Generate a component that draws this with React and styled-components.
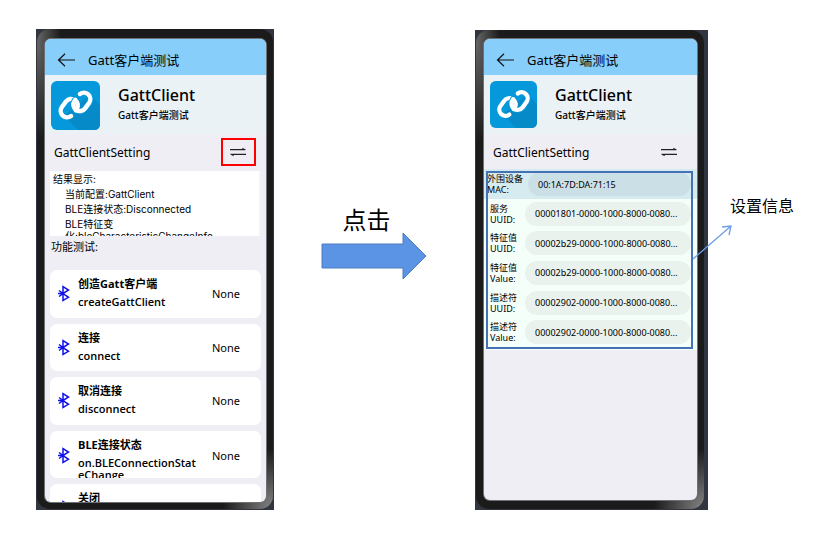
import React from "react";
import styled, { createGlobalStyle } from "styled-components";

const GlobalStyle = createGlobalStyle`
  * { box-sizing: border-box; }
  body {
    margin: 0;
    background: #fff;
    color: #000;
    font-family: "Noto Sans", "Noto Sans CJK SC", sans-serif;
  }
  h1, h2, p, ul { margin: 0; padding: 0; }
  ul { list-style: none; }
  button, input { font: inherit; color: inherit; margin: 0; }
`;

const Page = styled.main`
  display: grid;
  grid-template-columns: 238fr 201fr 233fr 112fr;
  padding: 29px 0 49px 36px;
`;

const Backdrop = styled.section`
  display: flex;
  min-width: 0;
  margin-top: ${(p) => (p.$offset ? "1px" : 0)};
  padding: 0 ${(p) => (p.$wide ? "4px" : "1px")} 1px 1px;
  background: #30353f;
`;

const Bezel = styled.div`
  flex: 1;
  min-width: 0;
  display: flex;
  padding: ${(p) => (p.$wide ? "9px 7px 9px 8px" : "10px 7px 7px 8px")};
  border-radius: 13px;
  background:
    radial-gradient(ellipse 24px 100px at 0 12px, #666, transparent),
    radial-gradient(ellipse 50px 60px at 100% 100%, #858585, transparent),
    #1b1b1b;
`;

const Screen = styled.div`
  flex: 1;
  min-width: 0;
  overflow: hidden;
  border-radius: 6px;
  background: #efeef4;
  box-shadow: 0 0 0 1px #6d7276;
`;

const TopBar = styled.header`
  display: flex;
  align-items: center;
  gap: 12px;
  height: 36px;
  padding: 5px 12px 0;
  background: #87cefa;
`;

const BackButton = styled.button`
  display: flex;
  padding: 0;
  border: 0;
  background: none;
`;

const BarTitle = styled.h1`
  font-size: 13px;
  font-weight: 400;
  line-height: 20px;
  white-space: nowrap;
`;

const AppInfo = styled.div`
  display: flex;
  align-items: flex-start;
  gap: 18px;
  height: 59px;
  padding: 6px 6px 0;
  background: #ebf2f5;
`;

const AppName = styled.h2`
  padding-top: 3px;
  font-size: 16px;
  font-weight: 500;
  line-height: 22px;
`;

const AppNote = styled.p`
  font-size: 10px;
  font-weight: 500;
  line-height: 18px;
`;

const SettingRow = styled.div`
  display: flex;
  align-items: center;
  justify-content: space-between;
  height: 35px;
  padding: 0 10px 0 9px;
  font-size: 12px;
`;

const SettingName = styled.span`
  padding-top: 2px;
`;

const SwapButton = styled.button`
  display: flex;
  align-items: center;
  justify-content: center;
  width: 35px;
  height: 28px;
  padding: 0 2px 0 0;
  border: 2px solid ${(p) => (p.$marked ? "#f00" : "transparent")};
  background: none;
`;

const Result = styled.div`
  height: 65px;
  margin: 2px 5px 0;
  padding: 1px 3px;
  overflow: hidden;
  border-right: 2px solid #f3f3f3;
  background: #fff;
  font-family: Inter, "Noto Sans CJK SC", sans-serif;
  font-size: 10px;
  line-height: 15px;
`;

const ResultLine = styled.p`
  padding-left: 12px;
  line-height: ${(p) => (p.$tight ? "8px" : "15px")};
`;

const SectionLabel = styled.p`
  height: 34px;
  padding: 3px 6px 0;
  font-size: 11px;
  line-height: 16px;
`;

const ListWindow = styled.div`
  height: 232px;
  overflow: hidden;
`;

const TestList = styled.ul`
  display: grid;
  grid-auto-rows: minmax(0, 1fr);
  gap: 6px;
  height: 262px;
  padding: 0 5px;
`;

const TestCard = styled.li`
  display: grid;
  grid-template-columns: 14px 124px 1fr;
  column-gap: 7px;
  padding: 0 8px 0 7px;
  overflow: hidden;
  border-radius: 7px;
  background: #fff;
`;

const CardIcon = styled.span`
  display: flex;
  align-items: center;
  justify-content: center;
`;

const CardText = styled.div`
  padding-top: 5px;
  font-family: "Open Sans", "Noto Sans CJK SC", sans-serif;
  font-size: 11px;
  font-weight: 700;
  line-height: 18px;
`;

const CardMethod = styled.p`
  padding-top: 3px;
  font-weight: 600;
  line-height: 12px;
  overflow-wrap: anywhere;
`;

const CardState = styled.span`
  align-self: center;
  justify-self: end;
  padding-right: 13px;
  font-size: 11px;
`;

const Form = styled.form`
  position: relative;
  display: grid;
  grid-template-rows: 30px;
  grid-auto-rows: minmax(0, 1fr);
  height: 181px;
  padding-bottom: 3px;
  background: #f5fffa;
`;

const Frame = styled.span`
  position: absolute;
  inset: 2px 4px 1px 2px;
  border: 2px solid #4472b4;
  pointer-events: none;
`;

const Field = styled.label`
  display: grid;
  grid-template-columns: ${(p) => (p.$wide ? "41px" : "35px")} minmax(0, 1fr);
  align-items: center;
  padding: 0 6px 0 ${(p) => (p.$wide ? "3px" : "6px")};
  background: ${(p) => (p.$wide ? "#d6ebf0" : "transparent")};
  font-size: 9px;
  line-height: 11px;
`;

const FieldName = styled.span`
  white-space: pre-line;
`;

const FieldInput = styled.input`
  width: 100%;
  height: 24px;
  padding: 0 10px;
  border: 0;
  border-radius: 12px;
  background: ${(p) => (p.$wide ? "#cbdfe6" : "#e9f2ed")};
  font-size: 9px;
`;

const Action = styled.div`
  display: flex;
  flex-direction: column;
  align-items: center;
  padding-top: 177px;
`;

const ActionText = styled.p`
  padding-right: 16px;
  font-family: "Noto Sans CJK SC", sans-serif;
  font-size: 24px;
  line-height: 25px;
`;

const Note = styled.aside`
  position: relative;
  padding: 164px 0 0 22px;
  font-family: "Noto Sans CJK SC", sans-serif;
  font-size: 16px;
  line-height: 24px;
  white-space: nowrap;
`;

const Pointer = styled.svg`
  position: absolute;
  left: -16px;
  top: 194px;
`;

const BackIcon = () => (
  <svg width="19" height="14" viewBox="0 0 19 14" fill="none" stroke="#111" strokeWidth="1.2">
    <path d="M18 7H1.5M8 .8 1.5 7 8 13.2" />
  </svg>
);

const SwapIcon = () => (
  <svg width="16" height="10" viewBox="0 0 16 10" fill="#222">
    <path d="M0 2H12.500L12 .8 15.500 2.300V3.200H0Z" />
    <path d="M16 8H3.500L4 9.200 .5 7.700V6.800H16Z" />
  </svg>
);

const BluetoothIcon = () => (
  <svg width="12" height="17" viewBox="0 0 12 17" fill="none" stroke="#1010e8" strokeWidth="1.5">
    <path d="M5 8.500V1.500L10.500 5 5 8.500 10.500 12.300 5 15.500V8.500M1 5.500 5 8.500 1 11.500M0 8.500H5" />
  </svg>
);

const linkPath = "M3.200 4V2.900A6.500 6.500 0 0 0-9.800 2.900V9.900A6.500 6.500 0 0 0 2.900 11.500";

const Logo = ({ size }) => (
  <svg width={size} height={size} viewBox="0 0 49 49" fill="none">
    <rect width="49" height="49" rx="6" fill="#0598db" />
    <path d="M13 35 27 49H43Q49 49 49 43V24L39 14Z" fill="#078ac8" />
    <g transform="translate(24.500 24) rotate(36)" strokeLinecap="round">
      <path d={linkPath} stroke="#fff" strokeWidth="4.400" />
      <path d={linkPath} transform="rotate(180)" stroke="#0598db" strokeWidth="6.400" />
      <path d="M3.200 4V2.900A6.500 6.500 0 0 0-3-3.600" stroke="#fff" strokeWidth="4.400" />
      <path d={linkPath} transform="rotate(180)" stroke="#fff" strokeWidth="4.400" />
    </g>
  </svg>
);

const Head = ({ logoSize, marked }) => (
  <>
    <TopBar>
      <BackButton type="button" aria-label="返回"><BackIcon /></BackButton>
      <BarTitle>Gatt客户端测试</BarTitle>
    </TopBar>
    <AppInfo>
      <Logo size={logoSize} />
      <div>
        <AppName>GattClient</AppName>
        <AppNote>Gatt客户端测试</AppNote>
      </div>
    </AppInfo>
    <SettingRow>
      <SettingName>GattClientSetting</SettingName>
      <SwapButton type="button" aria-label="切换设置" $marked={marked}><SwapIcon /></SwapButton>
    </SettingRow>
  </>
);

const tests = [
  ["创造Gatt客户端", "createGattClient"],
  ["连接", "connect"],
  ["取消连接", "disconnect"],
  ["BLE连接状态", "on.BLEConnectionStateChange"],
  ["关闭", "close"],
];

const fields = [
  ["外围设备\nMAC:", "00:1A:7D:DA:71:15"],
  ["服务\nUUID:", "00001801-0000-1000-8000-0080..."],
  ["特征值\nUUID:", "00002b29-0000-1000-8000-0080..."],
  ["特征值\nValue:", "00002b29-0000-1000-8000-0080..."],
  ["描述符\nUUID:", "00002902-0000-1000-8000-0080..."],
  ["描述符\nValue:", "00002902-0000-1000-8000-0080..."],
];

export default function App() {
  return (
    <>
      <GlobalStyle />
      <Page>
        <Backdrop>
          <Bezel>
            <Screen>
              <Head logoSize={49} marked />
              <Result>
                <p>结果显示:</p>
                <ResultLine>当前配置:GattClient</ResultLine>
                <ResultLine>BLE连接状态:Disconnected</ResultLine>
                <ResultLine>BLE特征变</ResultLine>
                <ResultLine $tight>化:bleCharacteristicChangeInfo</ResultLine>
              </Result>
              <SectionLabel>功能测试:</SectionLabel>
              <ListWindow>
                <TestList>
                  {tests.map(([title, method]) => (
                    <TestCard key={method}>
                      <CardIcon><BluetoothIcon /></CardIcon>
                      <CardText>
                        <p>{title}</p>
                        <CardMethod>{method}</CardMethod>
                      </CardText>
                      <CardState>None</CardState>
                    </TestCard>
                  ))}
                </TestList>
              </ListWindow>
            </Screen>
          </Bezel>
        </Backdrop>
        <Action>
          <ActionText>点击</ActionText>
          <svg width="107" height="50" viewBox="0 0 107 50">
            <path d="M1 13H82V2L105 25 82 48V37H1Z" fill="#5b93e5" stroke="#4c7cc0" />
          </svg>
        </Action>
        <Backdrop $offset $wide>
          <Bezel $wide>
            <Screen>
              <Head logoSize={47} />
              <Form>
                {fields.map(([name, value], i) => (
                  <Field key={name} $wide={i === 0}>
                    <FieldName>{name}</FieldName>
                    <FieldInput type="text" defaultValue={value} $wide={i === 0} />
                  </Field>
                ))}
                <Frame />
              </Form>
            </Screen>
          </Bezel>
        </Backdrop>
        <Note>
          设置信息
          <Pointer width="42" height="38" viewBox="0 0 42 38" fill="none" stroke="#6c9de8" strokeWidth="1.3">
            <path d="M1 36 39 3M30 4 39 3 37 12" />
          </Pointer>
        </Note>
      </Page>
    </>
  );
}
